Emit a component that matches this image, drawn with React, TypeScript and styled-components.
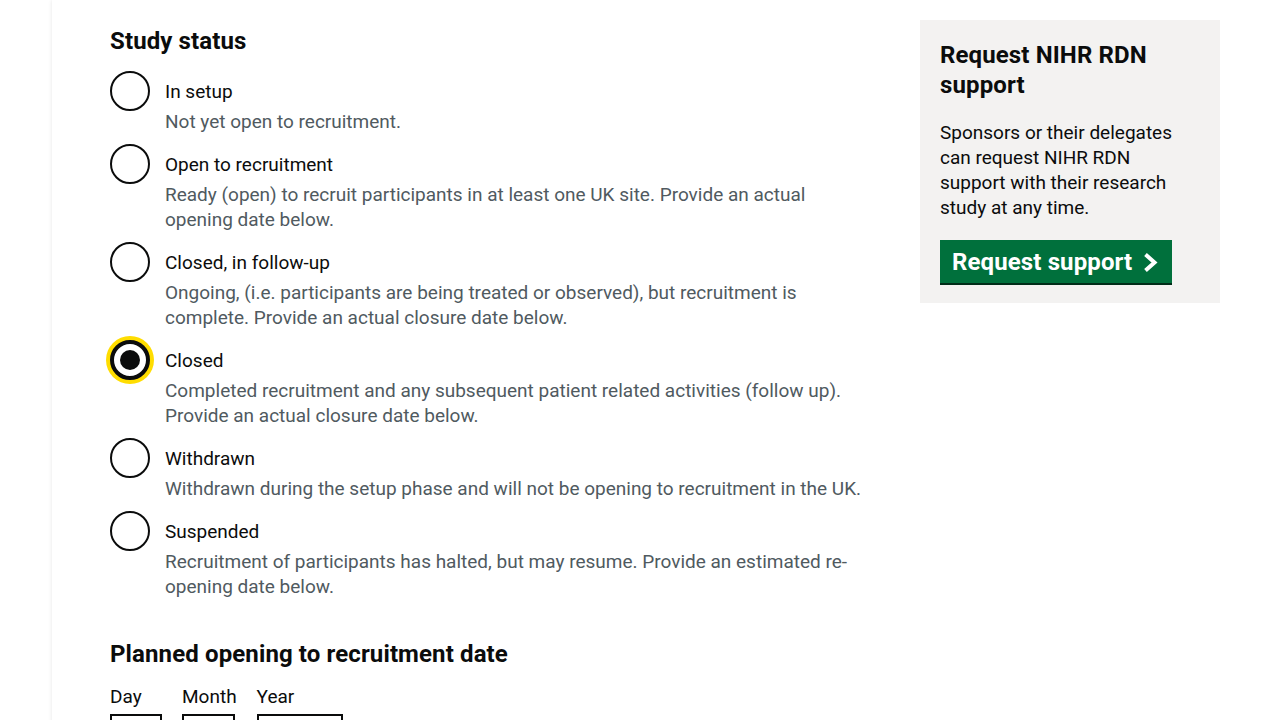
import React from "react";
import styled, { createGlobalStyle } from "styled-components";

const Global = createGlobalStyle`
  html, body { margin: 0; padding: 0; background: #ffffff; }
  body { font-family: Roboto, "Liberation Sans", Arial, sans-serif; color: #0b0c0c; overflow: hidden; }
  * { box-sizing: border-box; }
`;

const Page = styled.div`
  margin-left: 52px;
  min-height: 900px;
  background: #ffffff;
  box-shadow: 0 0 4px rgba(0, 0, 0, 0.1);
  padding: 26px 60px 0 58px;
  display: flex;
  gap: 50px;
  align-items: flex-start;
`;

const Main = styled.main`
  width: 760px;
  flex: none;
`;

const Heading = styled.h2`
  margin: 0 0 15px;
  font-size: 24px;
  line-height: 30px;
  font-weight: 700;
  letter-spacing: 0.12px;
`;

const Radios = styled.div`
  display: flex;
  flex-direction: column;
  gap: 10px;
  margin-bottom: 40px;
`;

const Item = styled.div`
  display: grid;
  grid-template-columns: 40px 1fr;
  column-gap: 15px;
  min-height: 40px;
`;

const Circle = styled.span<{ $checked?: boolean; $focus?: boolean }>`
  position: relative;
  width: 40px;
  height: 40px;
  border-radius: 50%;
  border: ${(p) => (p.$focus ? "4px" : "2px")} solid #0b0c0c;
  box-shadow: ${(p) => (p.$focus ? "0 0 0 4px #ffdd00" : "none")};
  background: #fff;
  grid-row: 1 / span 2;
  &::after {
    content: "";
    display: ${(p) => (p.$checked ? "block" : "none")};
    position: absolute;
    left: 50%;
    top: 50%;
    width: 20px;
    height: 20px;
    margin: -10px 0 0 -10px;
    border-radius: 50%;
    background: #0b0c0c;
  }
`;

const Label = styled.div`
  grid-column: 2;
  padding: 8px 0 5px;
  font-size: 19px;
  line-height: 25px;
`;

const Hint = styled.div`
  grid-column: 2;
  font-size: 19px;
  line-height: 25px;
  color: #505a5f;
`;

const DateRow = styled.div`
  display: flex;
  gap: 20px;
`;

const DateField = styled.div`
  display: flex;
  flex-direction: column;
  gap: 5px;
`;

const DateLabel = styled.label`
  font-size: 19px;
  line-height: 25px;
`;

const DateInput = styled.div<{ $w: number }>`
  width: ${(p) => p.$w}px;
  height: 40px;
  border: 2px solid #0b0c0c;
`;

const Aside = styled.aside`
  width: 300px;
  flex: none;
  margin-top: -6px;
  background: #f3f2f1;
  padding: 20px 20px 20px;
`;

const AsideHeading = styled.h2`
  margin: 0 0 20px;
  font-size: 24px;
  line-height: 30px;
  font-weight: 700;
  letter-spacing: 0.12px;
`;

const AsideText = styled.p`
  margin: 0 0 20px;
  font-size: 19px;
  line-height: 25px;
`;

const Button = styled.a`
  display: inline-flex;
  align-items: center;
  gap: 11px;
  background: #00703c;
  color: #ffffff;
  box-shadow: 0 2px 0 #002d18;
  padding: 7px 13px 6px 12px;
  font-size: 24px;
  line-height: 30px;
  font-weight: 700;
  letter-spacing: 0.12px;
  text-decoration: none;
`;

const items = [
  { label: "In setup", hint: "Not yet open to recruitment." },
  {
    label: "Open to recruitment",
    hint: "Ready (open) to recruit participants in at least one UK site. Provide an actual opening date below.",
  },
  {
    label: "Closed, in follow-up",
    hint: "Ongoing, (i.e. participants are being treated or observed), but recruitment is complete. Provide an actual closure date below.",
  },
  {
    label: "Closed",
    hint: "Completed recruitment and any subsequent patient related activities (follow up). Provide an actual closure date below.",
    checked: true,
  },
  {
    label: "Withdrawn",
    hint: "Withdrawn during the setup phase and will not be opening to recruitment in the UK.",
  },
  {
    label: "Suspended",
    hint: "Recruitment of participants has halted, but may resume. Provide an estimated re-opening date below.",
  },
];

export default function App() {
  return (
    <>
      <Global />
      <Page>
        <Main>
          <Heading>Study status</Heading>
          <Radios>
            {items.map((it) => (
              <Item key={it.label}>
                <Circle $checked={it.checked} $focus={it.checked} />
                <Label>{it.label}</Label>
                <Hint>{it.hint}</Hint>
              </Item>
            ))}
          </Radios>
          <Heading>Planned opening to recruitment date</Heading>
          <DateRow>
            <DateField>
              <DateLabel>Day</DateLabel>
              <DateInput $w={52} />
            </DateField>
            <DateField>
              <DateLabel>Month</DateLabel>
              <DateInput $w={53} />
            </DateField>
            <DateField>
              <DateLabel>Year</DateLabel>
              <DateInput $w={86} />
            </DateField>
          </DateRow>
        </Main>
        <Aside>
          <AsideHeading>Request NIHR RDN support</AsideHeading>
          <AsideText>
            Sponsors or their delegates can request NIHR RDN support with their research study at any time.
          </AsideText>
          <Button href="#">
            Request support
            <svg width="16" height="19" viewBox="0 0 16 19" aria-hidden="true">
              <path d="M2.5 1.5 L11.5 9.5 L2.5 17.5" fill="none" stroke="#ffffff" strokeWidth="4" strokeLinecap="butt" />
            </svg>
          </Button>
        </Aside>
      </Page>
    </>
  );
}
